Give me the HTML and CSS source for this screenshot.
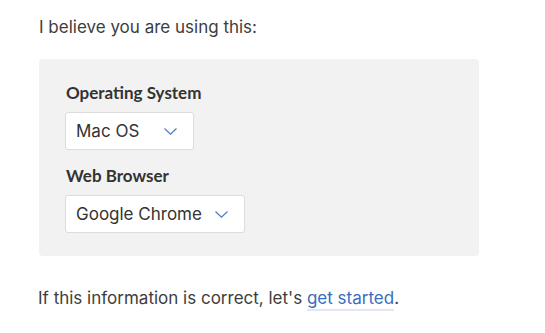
FILE: index.html
```html
<!DOCTYPE html>
<html>
  <head>
    <title>Detected setup</title>
    <link rel="stylesheet" href="styles.css">
  </head>
  <body>
    <div class="page">
      <p class="intro">I believe you are using this:</p>

      <div class="panel">
        <div class="field">
          <label class="field-label">Operating System</label>
          <div class="select select-os">
            <span>Mac OS</span>
            <svg class="chevron" width="13" height="7" viewBox="0 0 13 7">
              <path d="M0.5 0.5 L6.5 6.2 L12.5 0.5" fill="none" stroke="#4d7cc4" stroke-width="1.2"/>
            </svg>
          </div>
        </div>
        <div class="field">
          <label class="field-label">Web Browser</label>
          <div class="select select-browser">
            <span>Google Chrome</span>
            <svg class="chevron" width="13" height="7" viewBox="0 0 13 7">
              <path d="M0.5 0.5 L6.5 6.2 L12.5 0.5" fill="none" stroke="#4d7cc4" stroke-width="1.2"/>
            </svg>
          </div>
        </div>
      </div>

      <p class="outro">If this information is correct, let's <a href="#" class="link">get started</a>.</p>
    </div>
  </body>
</html>
```

FILE: styles.css
```css
body {
  margin: 0;
  padding: 0;
  background-color: #fff;
  font-family: Inter, "Noto Sans", sans-serif;
  color: #3d3d3d;
}

.page {
  padding: 14px 0 0 39px;
  width: 440px;
}

.intro {
  margin: 0;
  font-size: 17px;
  line-height: 26px;
}

.panel {
  margin-top: 19px;
  background-color: #f2f2f2;
  border-radius: 4px;
  padding: 24px 27px 23px;
  display: flex;
  flex-direction: column;
  gap: 16px;
}

.field {
  display: flex;
  flex-direction: column;
  align-items: flex-start;
}

.field-label {
  font-family: Lato, sans-serif;
  font-weight: 700;
  font-size: 17px;
  line-height: 20px;
  color: #333;
  margin-bottom: 9px;
}

.select {
  margin-left: -1px;
  height: 38px;
  box-sizing: border-box;
  display: flex;
  align-items: center;
  justify-content: space-between;
  padding: 0 16px 0 10px;
  background-color: #fff;
  border: 1px solid #dcdcdc;
  border-radius: 3px;
  font-size: 17px;
  color: #333;
}

.select-os {
  width: 129px;
}

.select-browser {
  width: 180px;
}

.chevron {
  display: block;
}

.outro {
  margin: 29px 0 0 -1px;
  font-size: 17px;
  line-height: 26px;
}

.link {
  color: #3a6cc0;
  text-decoration: none;
  border-bottom: 2px solid #e1e8f3;
  padding-bottom: 1px;
}
```
